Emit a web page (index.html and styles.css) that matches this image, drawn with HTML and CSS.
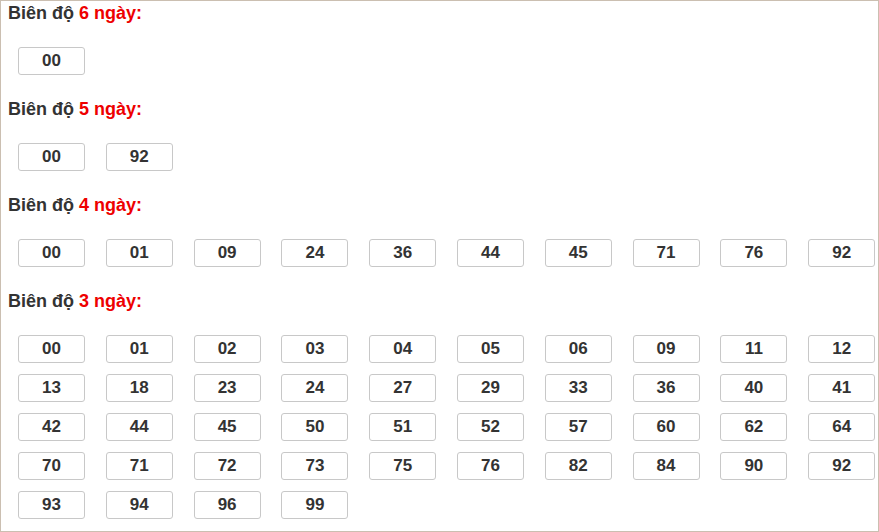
FILE: index.html
```html
<!DOCTYPE html>
<html lang="vi">
<head>
<meta charset="utf-8">
<title>Biên độ</title>
<link rel="stylesheet" href="styles.css">
</head>
<body>
<div class="frame">
  <section class="group">
    <h3 class="title">Biên độ <span class="hl">6 ngày:</span></h3>
    <div class="grid">
      <div class="num">00</div>
    </div>
  </section>
  <section class="group">
    <h3 class="title">Biên độ <span class="hl">5 ngày:</span></h3>
    <div class="grid">
      <div class="num">00</div><div class="num">92</div>
    </div>
  </section>
  <section class="group">
    <h3 class="title">Biên độ <span class="hl">4 ngày:</span></h3>
    <div class="grid">
      <div class="num">00</div><div class="num">01</div><div class="num">09</div><div class="num">24</div><div class="num">36</div><div class="num">44</div><div class="num">45</div><div class="num">71</div><div class="num">76</div><div class="num">92</div>
    </div>
  </section>
  <section class="group">
    <h3 class="title">Biên độ <span class="hl">3 ngày:</span></h3>
    <div class="grid">
      <div class="num">00</div><div class="num">01</div><div class="num">02</div><div class="num">03</div><div class="num">04</div><div class="num">05</div><div class="num">06</div><div class="num">09</div><div class="num">11</div><div class="num">12</div>
      <div class="num">13</div><div class="num">18</div><div class="num">23</div><div class="num">24</div><div class="num">27</div><div class="num">29</div><div class="num">33</div><div class="num">36</div><div class="num">40</div><div class="num">41</div>
      <div class="num">42</div><div class="num">44</div><div class="num">45</div><div class="num">50</div><div class="num">51</div><div class="num">52</div><div class="num">57</div><div class="num">60</div><div class="num">62</div><div class="num">64</div>
      <div class="num">70</div><div class="num">71</div><div class="num">72</div><div class="num">73</div><div class="num">75</div><div class="num">76</div><div class="num">82</div><div class="num">84</div><div class="num">90</div><div class="num">92</div>
      <div class="num">93</div><div class="num">94</div><div class="num">96</div><div class="num">99</div>
    </div>
  </section>
</div>
</body>
</html>
```
FILE: styles.css
```css
* { box-sizing: border-box; }
html, body { margin: 0; padding: 0; background: #fff; }
body { font-family: "Liberation Sans", Arial, sans-serif; color: #333; }
.frame {
  width: 879px;
  height: 532px;
  border: 1px solid #cbbfb1;
  padding-top: 2px;
  overflow: hidden;
}
.group { margin: 0; }
.title {
  margin: 0 0 24px 0;
  padding-left: 7px;
  font-size: 18px;
  line-height: 20px;
  font-weight: bold;
  color: #333;
}
.hl { color: #ee0000; }
.grid {
  display: grid;
  grid-template-columns: repeat(10, 67px);
  column-gap: 20.8px;
  row-gap: 11px;
  padding-left: 17px;
  margin-bottom: 24px;
}
.num {
  height: 28px;
  border: 1px solid #c8c8c8;
  border-radius: 3px;
  text-align: center;
  font-size: 17px;
  font-weight: bold;
  line-height: 26px;
  color: #333;
}
```
